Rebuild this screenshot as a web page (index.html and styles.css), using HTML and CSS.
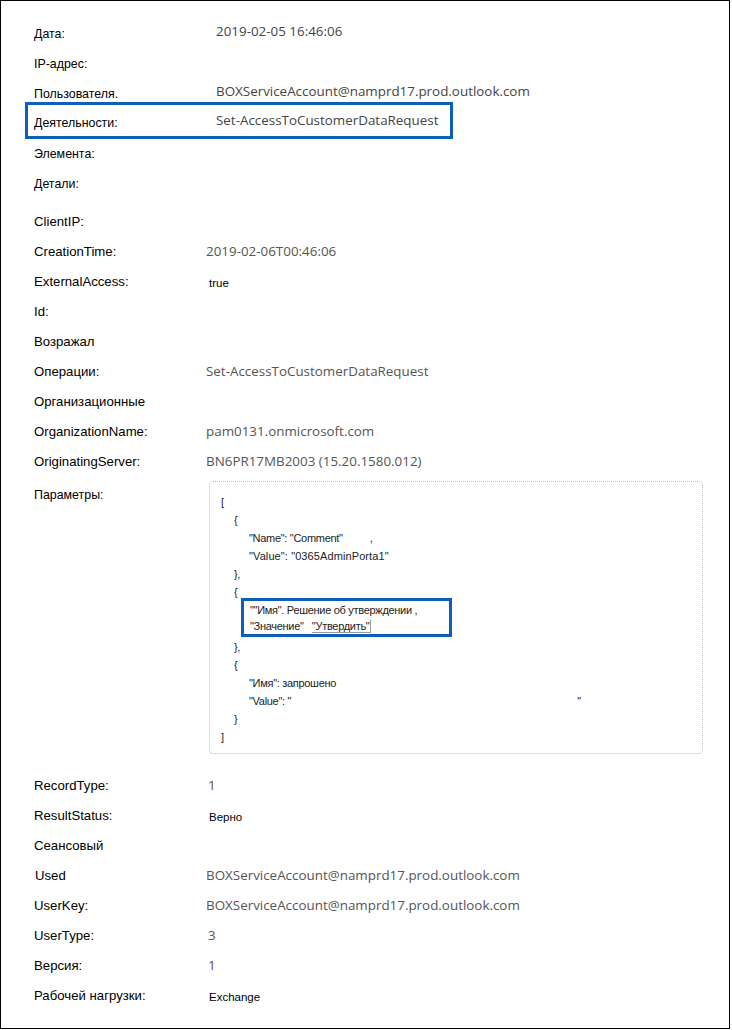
FILE: index.html
```html
<!DOCTYPE html>
<html lang="ru">
<head>
    <meta charset="UTF-8">
    <title>Сведения о записи аудита</title>
    <link rel="stylesheet" href="styles.css">
</head>
<body>
    <div class="page">
        <!-- Общие сведения -->
        <div class="sec sec-top">
            <div class="row"><span class="lbl">Дата:</span><span class="val">2019-02-05 16:46:06</span></div>
            <div class="row"><span class="lbl">IP-адрес:</span><span class="val"></span></div>
            <div class="row"><span class="lbl">Пользователя.</span><span class="val">BOXServiceAccount@namprd17.prod.outlook.com</span></div>
            <div class="row marked"><span class="lbl">Деятельности:</span><span class="val">Set-AccessToCustomerDataRequest</span></div>
            <div class="row"><span class="lbl">Элемента:</span><span class="val"></span></div>
            <div class="row"><span class="lbl">Детали:</span><span class="val"></span></div>
        </div>

        <!-- Детали -->
        <div class="sec sec-details">
            <div class="row"><span class="lbl">ClientIP:</span><span class="val"></span></div>
            <div class="row"><span class="lbl">CreationTime:</span><span class="val">2019-02-06T00:46:06</span></div>
            <div class="row"><span class="lbl">ExternalAccess:</span><span class="val small">true</span></div>
            <div class="row"><span class="lbl">Id:</span><span class="val"></span></div>
            <div class="row"><span class="lbl">Возражал</span><span class="val"></span></div>
            <div class="row"><span class="lbl">Операции:</span><span class="val">Set-AccessToCustomerDataRequest</span></div>
            <div class="row"><span class="lbl">Организационные</span><span class="val"></span></div>
            <div class="row"><span class="lbl">OrganizationName:</span><span class="val">pam0131.onmicrosoft.com</span></div>
            <div class="row"><span class="lbl">OriginatingServer:</span><span class="val">BN6PR17MB2003 (15.20.1580.012)</span></div>

            <div class="params">
                <span class="params-lbl">Параметры:</span>
                <div class="code">
                    <div class="ln">[</div>
                    <div class="ln l1">{</div>
                    <div class="ln l2">"Name": "Comment"<span class="gap-comma">,</span></div>
                    <div class="ln l2 wide">"Value": "0365AdminPorta1"</div>
                    <div class="ln l1">},</div>
                    <div class="ln l1">{</div>
                    <div class="code-mark">
                        <div class="ln">""Имя". Решение об утверждении ,</div>
                        <div class="ln">"Значение"&nbsp;&nbsp;&nbsp;<span class="masked">"Утвердить"</span></div>
                    </div>
                    <div class="ln l1">},</div>
                    <div class="ln l1">{</div>
                    <div class="ln l2">"Имя": запрошено</div>
                    <div class="ln l2">"Value": "<span class="stray">"</span></div>
                    <div class="ln l1">}</div>
                    <div class="ln">]</div>
                </div>
            </div>
        </div>

        <!-- Прочее -->
        <div class="sec sec-rest">
            <div class="row"><span class="lbl">RecordType:</span><span class="val num">1</span></div>
            <div class="row"><span class="lbl">ResultStatus:</span><span class="val small">Верно</span></div>
            <div class="row"><span class="lbl">Сеансовый</span><span class="val"></span></div>
            <div class="row"><span class="lbl used">Used</span><span class="val">BOXServiceAccount@namprd17.prod.outlook.com</span></div>
            <div class="row"><span class="lbl">UserKey:</span><span class="val">BOXServiceAccount@namprd17.prod.outlook.com</span></div>
            <div class="row"><span class="lbl">UserType:</span><span class="val num">3</span></div>
            <div class="row"><span class="lbl">Версия:</span><span class="val num">1</span></div>
            <div class="row"><span class="lbl">Рабочей нагрузки:</span><span class="val small">Exchange</span></div>
        </div>
    </div>
</body>
</html>
```

FILE: styles.css
```css
body {
    margin: 0;
    background-color: white;
    font-family: 'Liberation Sans', Arial, sans-serif;
    color: black;
}

.page {
    width: 730px;
    height: 1029px;
    border: 1px solid black;
    box-sizing: border-box;
    padding-left: 33px;
}

.sec {
    display: flex;
    flex-direction: column;
}

.row {
    display: flex;
    align-items: center;
    height: 30px;
}

.lbl {
    flex: none;
    font-size: 13.2px;
}

.val {
    font-family: 'Open Sans', sans-serif;
    font-size: 13.4px;
    color: #555;
}

/* Верхний блок */
.sec-top {
    padding-top: 16px;
}

.sec-top .lbl {
    width: 182px;
    font-size: 12.4px;
    padding-top: 4px;
}

.sec-top .val {
    color: #444;
    padding-bottom: 2px;
}

.row.marked {
    width: 428px;
    height: 37px;
    box-sizing: border-box;
    margin: -5px 0 -2px -9px;
    padding-left: 6px;
    border: 3px solid #0d5fb9;
}

/* Детали */
.sec-details {
    padding-top: 9px;
}

.sec-details .lbl,
.sec-rest .lbl {
    width: 172px;
}

.sec-rest .lbl.used {
    width: 171px;
    padding-left: 1px;
}

.val.small {
    font-family: 'Liberation Sans', Arial, sans-serif;
    font-size: 11.5px;
    color: black;
    padding-left: 3px;
    padding-top: 4px;
}

.val.num {
    padding-left: 2px;
}

.params {
    display: flex;
    margin-top: 5px;
}

.params-lbl {
    flex: none;
    width: 175px;
    font-size: 12.4px;
    padding-top: 7px;
}

.code {
    width: 494px;
    height: 273px;
    box-sizing: border-box;
    border: 1px dotted #b9b9e0;
    border-radius: 4px;
    padding: 11px 0 0 11px;
    font-size: 11px;
    letter-spacing: -0.3px;
    color: #222;
}

.ln {
    height: 18.1px;
    line-height: 18px;
    white-space: pre;
}

.l1 {
    padding-left: 13px;
}

.l2 {
    padding-left: 28px;
}

.ln.wide {
    letter-spacing: 0.1px;
}

.gap-comma {
    padding-left: 27px;
}

.code-mark {
    width: 211px;
    box-sizing: border-box;
    margin: -4px 0 1px 20px;
    padding: 1px 0 0 6px;
    border: 3px solid #0d5fb9;
}

.code-mark .ln {
    height: 16px;
    line-height: 16px;
}

.masked {
    border-bottom: 1px solid #999;
    border-right: 1px solid #999;
    padding-right: 1px;
}

.stray {
    padding-left: 286px;
    font-size: 11px;
}

/* Остальное */
.sec-rest {
    padding-top: 16px;
}
```
